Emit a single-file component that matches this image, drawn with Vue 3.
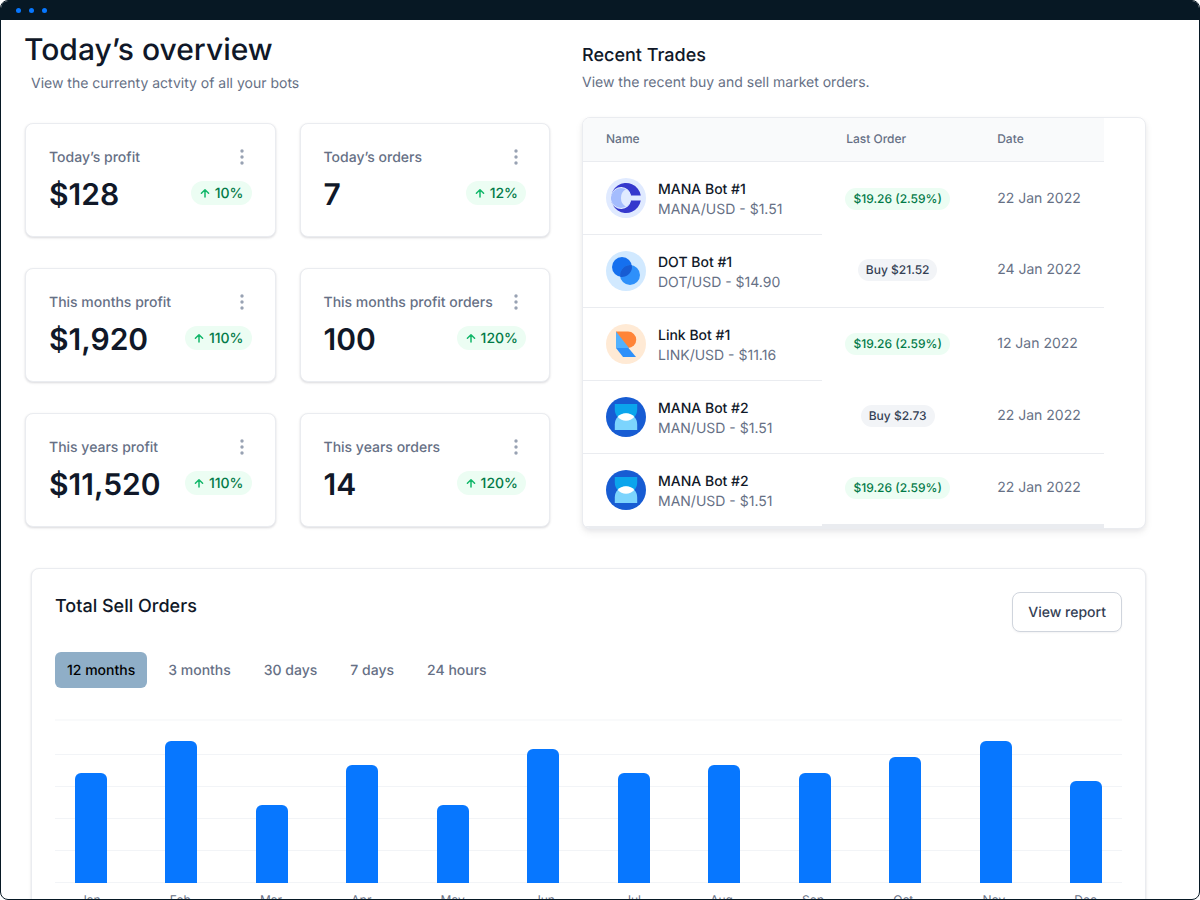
<script setup>
const stats = [
  { label: 'Today’s profit', value: '$128', change: '10%' },
  { label: 'Today’s orders', value: '7', change: '12%' },
  { label: 'This months profit', value: '$1,920', change: '110%' },
  { label: 'This months profit orders', value: '100', change: '120%' },
  { label: 'This years profit', value: '$11,520', change: '110%' },
  { label: 'This years orders', value: '14', change: '120%' },
]

const trades = [
  { icon: 'mana', name: 'MANA Bot #1', pair: 'MANA/USD - $1.51', order: '$19.26 (2.59%)', gain: true, date: '22 Jan 2022' },
  { icon: 'dot', name: 'DOT Bot #1', pair: 'DOT/USD - $14.90', order: 'Buy $21.52', gain: false, date: '24 Jan 2022' },
  { icon: 'link', name: 'Link Bot #1', pair: 'LINK/USD - $11.16', order: '$19.26 (2.59%)', gain: true, date: '12 Jan 2022' },
  { icon: 'man', name: 'MANA Bot #2', pair: 'MAN/USD - $1.51', order: 'Buy $2.73', gain: false, date: '22 Jan 2022' },
  { icon: 'man', name: 'MANA Bot #2', pair: 'MAN/USD - $1.51', order: '$19.26 (2.59%)', gain: true, date: '22 Jan 2022' },
]

const ranges = ['12 months', '3 months', '30 days', '7 days', '24 hours']

const months = [
  { name: 'Jan', value: 110 },
  { name: 'Feb', value: 142 },
  { name: 'Mar', value: 78 },
  { name: 'Apr', value: 118 },
  { name: 'May', value: 78 },
  { name: 'Jun', value: 134 },
  { name: 'Jul', value: 110 },
  { name: 'Aug', value: 118 },
  { name: 'Sep', value: 110 },
  { name: 'Oct', value: 126 },
  { name: 'Nov', value: 142 },
  { name: 'Dec', value: 102 },
]
</script>

<template>
  <div class="window">
    <header class="titlebar">
      <span class="light"></span><span class="light"></span><span class="light"></span>
    </header>

    <main class="content">
      <div class="columns">
        <section class="overview">
          <h1>Today’s overview</h1>
          <p class="sub indent">View the currenty actvity of all your bots</p>
          <div class="stats">
            <article v-for="s in stats" :key="s.label" class="card stat">
              <div class="stat-row">
                <h2 class="stat-label">{{ s.label }}</h2>
                <button class="more" type="button" aria-label="More options">
                  <svg width="20" height="20" viewBox="0 0 20 20" fill="#98a2b3">
                    <circle cx="10" cy="4" r="1.7" /><circle cx="10" cy="10" r="1.7" /><circle cx="10" cy="16" r="1.7" />
                  </svg>
                </button>
              </div>
              <div class="stat-row">
                <span class="value">{{ s.value }}</span>
                <span class="change">
                  <svg width="12" height="12" viewBox="0 0 12 12" fill="none" stroke="#12b76a" stroke-width="1.5" stroke-linecap="round" stroke-linejoin="round">
                    <path d="M6 9V1.7M2.4 5.3 6 1.7 9.6 5.3" />
                  </svg>
                  {{ s.change }}
                </span>
              </div>
            </article>
          </div>
        </section>

        <section class="trades">
          <h2 class="title">Recent Trades</h2>
          <p class="sub">View the recent buy and sell market orders.</p>
          <div class="card table-card">
            <table>
              <thead>
                <tr>
                  <th class="col-name" scope="col">Name</th>
                  <th class="col-order" scope="col">Last Order</th>
                  <th class="col-date" scope="col">Date</th>
                </tr>
              </thead>
              <tbody>
                <tr v-for="(t, i) in trades" :key="i">
                  <td class="name-cell">
                    <div class="bot">
                      <svg v-if="t.icon === 'mana'" width="40" height="40" viewBox="0 0 40 40">
                        <circle cx="20" cy="20" r="20" fill="#e0eaff" />
                        <path d="M34.8 17.4A15 15 0 1 0 34.8 22.6H25A10 10 0 0 1 5.4 23.5V16.5A10 10 0 0 1 25 17.4Z" fill="#3538cd" />
                        <circle cx="15" cy="20" r="10" fill="#a4bcfd" />
                        <path d="M20 11.3A10 10 0 0 1 20 28.7A10 10 0 0 1 20 11.3Z" fill="#e0eaff" />
                      </svg>
                      <svg v-else-if="t.icon === 'dot'" width="40" height="40" viewBox="0 0 40 40">
                        <circle cx="20" cy="20" r="20" fill="#d1e9ff" />
                        <circle cx="16" cy="16" r="10" fill="#1570ef" />
                        <circle cx="24" cy="24" r="10" fill="#2e90fa" />
                        <path d="M14.2 25.8A10 10 0 0 1 25.8 14.2A10 10 0 0 1 14.2 25.8Z" fill="#175cd3" />
                      </svg>
                      <svg v-else-if="t.icon === 'link'" width="40" height="40" viewBox="0 0 40 40">
                        <circle cx="20" cy="20" r="20" fill="#ffead5" />
                        <path d="M10 7.5H22A8.2 8.2 0 0 1 22 24H10Z" fill="#ff8438" />
                        <path d="M10 7.5 23 24H10Z" fill="#53b1fd" />
                        <path d="M10 24H22.5L30 33H17Z" fill="#2e90fa" />
                      </svg>
                      <svg v-else width="40" height="40" viewBox="0 0 40 40">
                        <circle cx="20" cy="20" r="20" fill="#175cd3" />
                        <path d="M8.8 7H31.2V12.5A11.2 11.2 0 0 1 8.8 12.5Z" fill="#0ba5ec" />
                        <path d="M8.8 33V27.5A11.2 11.2 0 0 1 31.2 27.5V33Z" fill="#7cd4fd" />
                        <path d="M11.7 20A11.2 11.2 0 0 1 28.3 20A11.2 11.2 0 0 1 11.7 20Z" fill="#fff" />
                      </svg>
                      <div class="bot-text">
                        <div class="bot-name">{{ t.name }}</div>
                        <div class="bot-pair">{{ t.pair }}</div>
                      </div>
                    </div>
                  </td>
                  <td class="order-cell"><span class="pill" :class="{ gain: t.gain }">{{ t.order }}</span></td>
                  <td class="date-cell">{{ t.date }}</td>
                </tr>
              </tbody>
            </table>
          </div>
        </section>
      </div>

      <section class="card chart-card">
        <div class="chart-head">
          <h2 class="title">Total Sell Orders</h2>
          <button class="report" type="button">View report</button>
        </div>
        <div class="ranges">
          <button v-for="(r, i) in ranges" :key="r" type="button" class="range" :class="{ active: i === 0 }">{{ r }}</button>
        </div>
        <div class="plot">
          <div class="lines"><i v-for="n in 6" :key="n"></i></div>
          <div class="bars">
            <div v-for="m in months" :key="m.name" class="bar" :style="{ height: m.value + 'px' }"></div>
          </div>
        </div>
        <div class="months">
          <span v-for="m in months" :key="m.name">{{ m.name }}</span>
        </div>
      </section>
    </main>
  </div>
</template>

<style>
body {
  background: #fff;
}
</style>

<style scoped>
* {
  box-sizing: border-box;
}
.window {
  height: 100vh;
  display: flex;
  flex-direction: column;
  overflow: hidden;
  border: 1px solid #071824;
  border-radius: 8px;
  background: #fff;
  color: #101828;
  font-family: Inter, "Liberation Sans", sans-serif;
  font-size: 14px;
  line-height: 20px;
  text-rendering: geometricPrecision;
}
.titlebar {
  flex: none;
  height: 19px;
  padding: 0 15px;
  display: flex;
  align-items: center;
  gap: 8px;
  background: #071824;
}
.light {
  width: 5px;
  height: 5px;
  border-radius: 50%;
  background: #0777ff;
}
.content {
  flex: 1;
  min-height: 0;
  overflow: hidden;
  padding: 11px 53px 0 23px;
}
h1,
h2,
p {
  margin: 0;
}
button {
  font: inherit;
  text-rendering: inherit;
  cursor: pointer;
}
svg {
  display: block;
  flex: none;
}
.columns {
  display: grid;
  grid-template-columns: 526fr 564fr;
  gap: 32px;
}
h1 {
  font-size: 30px;
  line-height: 38px;
  font-weight: 500;
}
.sub {
  color: #667085;
}
.indent {
  margin: 5px 0 29px 7px;
}
.card {
  border: 1px solid #eaecf0;
  border-radius: 8px;
  background: #fff;
  box-shadow: 0 1px 3px rgba(16, 24, 40, 0.1), 0 1px 2px rgba(16, 24, 40, 0.06);
}
.stats {
  display: grid;
  grid-template-columns: 1fr 1fr;
  gap: 31px 24px;
  margin-left: 1px;
}
.stat {
  height: 114px;
  padding: 24px 23px 0;
}
.stat-row {
  display: flex;
  justify-content: space-between;
  align-items: center;
}
.stat-label {
  font-size: 14px;
  line-height: 20px;
  font-weight: 500;
  color: #667085;
}
.more {
  margin-top: -2px;
  padding: 0;
  border: 0;
  background: none;
}
.value {
  font-size: 30px;
  line-height: 54px;
  font-weight: 600;
}
.change {
  display: flex;
  align-items: center;
  gap: 4px;
  height: 24px;
  margin-bottom: 4px;
  padding: 2px 8px 0;
  border-radius: 12px;
  background: #ecfdf3;
  color: #027a48;
  font-weight: 500;
}
.trades {
  padding-top: 11px;
}
.title {
  font-size: 18px;
  line-height: 28px;
  font-weight: 500;
}
.trades .sub {
  margin: 3px 0 24px;
}
.table-card {
  overflow: hidden;
  box-shadow: 0 4px 8px rgba(16, 24, 40, 0.06), 0 2px 4px rgba(16, 24, 40, 0.05);
}
table {
  width: calc(100% - 41px);
  table-layout: fixed;
  border-collapse: separate;
  border-spacing: 0;
}
th {
  height: 44px;
  padding: 0 23px 2px;
  border-bottom: 1px solid #eaecf0;
  background: #f9fafb;
  font-size: 12px;
  line-height: 18px;
  font-weight: 500;
  text-align: left;
  color: #667085;
}
.col-name {
  width: 45.9%;
}
.col-order {
  width: 29%;
}
.col-order,
.col-date {
  padding: 0 24px 2px;
}
td {
  height: 73px;
  padding: 0;
}
.name-cell {
  padding: 0 23px;
  border-bottom: 1px solid #eaecf0;
}
.order-cell {
  text-align: center;
}
.date-cell {
  padding: 0 0 0 24px;
  color: #667085;
  white-space: nowrap;
}
tr:nth-child(n + 2) .order-cell,
tr:nth-child(n + 2) .date-cell {
  padding-bottom: 2px;
}
tr:nth-child(even) .order-cell,
tr:nth-child(even) .date-cell {
  border-bottom: 1px solid #eaecf0;
}
tr:last-child td {
  height: 74px;
  border-bottom: 4px solid #eaecf0;
}
tbody tr:last-child .name-cell {
  border-bottom-width: 2px;
}
.bot {
  display: flex;
  align-items: center;
  gap: 12px;
}
.bot-text {
  padding-top: 2px;
}
.bot-name {
  height: 20px;
  font-weight: 500;
}
.bot-pair {
  height: 18px;
  color: #667085;
}
.pill {
  display: inline-block;
  padding: 2px 8px;
  border-radius: 11px;
  background: #f2f4f7;
  color: #344054;
  font-size: 12px;
  line-height: 18px;
  font-weight: 500;
}
.gain {
  background: #ecfdf3;
  color: #027a48;
}
.chart-card {
  margin: 39px 0 0 7px;
  padding: 23px;
}
.chart-head {
  display: flex;
  justify-content: space-between;
  align-items: flex-start;
}
.chart-head .title {
  padding-top: 1px;
}
.report {
  height: 40px;
  padding: 2px 15px 0;
  border: 1px solid #d0d5dd;
  border-radius: 8px;
  background: #fff;
  box-shadow: 0 1px 2px rgba(16, 24, 40, 0.05);
  color: #344054;
  font-weight: 500;
}
.ranges {
  display: flex;
  gap: 9px;
  margin-top: 20px;
}
.range {
  height: 36px;
  padding: 2px 12px 0;
  border: 0;
  border-radius: 6px;
  background: none;
  color: #667085;
  font-weight: 500;
}
.range.active {
  background: #8faec7;
  color: #000;
}
.plot {
  display: grid;
  margin-top: 31px;
}
.lines,
.bars {
  grid-area: 1 / 1;
}
.lines {
  display: flex;
  flex-direction: column;
  justify-content: space-between;
  height: 164px;
}
.lines i {
  height: 1px;
  background: #f2f4f7;
}
.lines i:first-child {
  height: 2px;
  margin-bottom: 2px;
  background: #f9fafb;
}
.bars {
  display: flex;
  justify-content: space-between;
  align-items: flex-end;
  padding: 0 20px;
}
.bar {
  width: 32px;
  border-radius: 6px 6px 0 0;
  background: #0777ff;
}
.months {
  display: flex;
  justify-content: space-between;
  margin-top: 8px;
  padding: 0 25px;
  font-size: 12px;
  line-height: 18px;
  color: #667085;
}
</style>
